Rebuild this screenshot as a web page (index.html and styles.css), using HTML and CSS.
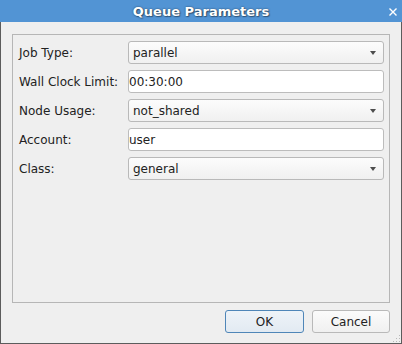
FILE: index.html
```html
<!DOCTYPE html>
<html>
<head>
<meta charset="utf-8">
<link rel="stylesheet" href="styles.css">
</head>
<body>
<div class="window">
  <div class="titlebar">
    <span class="title">Queue Parameters</span>
    <svg class="close" width="8" height="8" viewBox="0 0 8 8"><path d="M0.5 0.5 L7.5 7.5 M7.5 0.5 L0.5 7.5" stroke="#fff" stroke-width="1.4" fill="none"/></svg>
  </div>
  <div class="content">
    <div class="group">
      <div class="form">
        <label class="label">Job Type:</label>
        <div class="combo"><span>parallel</span><span class="arrow"></span></div>
        <label class="label">Wall Clock Limit:</label>
        <div class="field">00:30:00</div>
        <label class="label">Node Usage:</label>
        <div class="combo"><span>not_shared</span><span class="arrow"></span></div>
        <label class="label">Account:</label>
        <div class="field">user</div>
        <label class="label">Class:</label>
        <div class="combo"><span>general</span><span class="arrow"></span></div>
      </div>
    </div>
    <div class="buttons">
      <div class="btn btn-default">OK</div>
      <div class="btn">Cancel</div>
    </div>
  </div>
  <svg class="grip" width="9" height="9" viewBox="0 0 9 9">
    <g fill="#b8b8b8">
      <rect x="7" y="1" width="1" height="1"/>
      <rect x="4" y="4" width="1" height="1"/><rect x="7" y="4" width="1" height="1"/>
      <rect x="1" y="7" width="1" height="1"/><rect x="4" y="7" width="1" height="1"/><rect x="7" y="7" width="1" height="1"/>
    </g>
  </svg>
</div>
</body>
</html>
```

FILE: styles.css
```css
* { box-sizing: border-box; }
html, body { margin: 0; padding: 0; }
body {
  width: 402px;
  height: 344px;
  background: #efefef;
  font-family: "DejaVu Sans", "Liberation Sans", sans-serif;
  font-size: 12px;
  color: #222;
  overflow: hidden;
}
.window {
  position: relative;
  width: 402px;
  height: 344px;
  border: 1px solid #5c5c5c;
  border-top: none;
  display: flex;
  flex-direction: column;
  background: #efefef;
}
.titlebar {
  position: relative;
  height: 22px;
  margin: 0 -1px;
  background: #5294d4;
  display: flex;
  align-items: center;
  justify-content: center;
}
.title {
  color: #fff;
  font-weight: bold;
  font-size: 13px;
  text-shadow: 0 0 2px rgba(0,0,0,0.55), 1px 1px 1px rgba(0,0,0,0.35);
}
.close {
  position: absolute;
  right: 5px;
  top: 8px;
}
.content {
  flex: 1;
  display: flex;
  flex-direction: column;
  padding: 12px 11px 10px 11px;
}
.group {
  flex: 1;
  border: 1px solid #b6b6b6;
  padding: 6px 5px 5px 6px;
}
.form {
  display: grid;
  grid-template-columns: 109px 1fr;
  grid-auto-rows: 23px;
  row-gap: 6px;
  align-items: center;
}
.label {
  white-space: nowrap;
}
.combo {
  height: 23px;
  border: 1px solid #b9b9b9;
  border-radius: 3px;
  background: linear-gradient(#fcfcfc, #f0f0f0);
  display: flex;
  align-items: center;
  justify-content: space-between;
  padding: 0 7px 0 4px;
}
.arrow {
  width: 0;
  height: 0;
  border-left: 3.5px solid transparent;
  border-right: 3.5px solid transparent;
  border-top: 4px solid #4d4d4d;
}
.field {
  height: 23px;
  border: 1px solid #bcbcbc;
  border-radius: 3px;
  background: #fff;
  display: flex;
  align-items: center;
  padding: 0 1px 0 0;
}
.buttons {
  display: flex;
  justify-content: flex-end;
  gap: 8px;
  padding-top: 7px;
}
.btn {
  width: 78px;
  height: 23px;
  border: 1px solid #b9b9b9;
  border-radius: 3px;
  background: linear-gradient(#fbfbfb, #f0f0f0);
  display: flex;
  align-items: center;
  justify-content: center;
}
.btn-default {
  width: 79px;
  border-color: #4f86b8;
  background: linear-gradient(#eef3f8, #e2eaf2);
}
.grip {
  position: absolute;
  right: 0;
  bottom: 0;
}
```
